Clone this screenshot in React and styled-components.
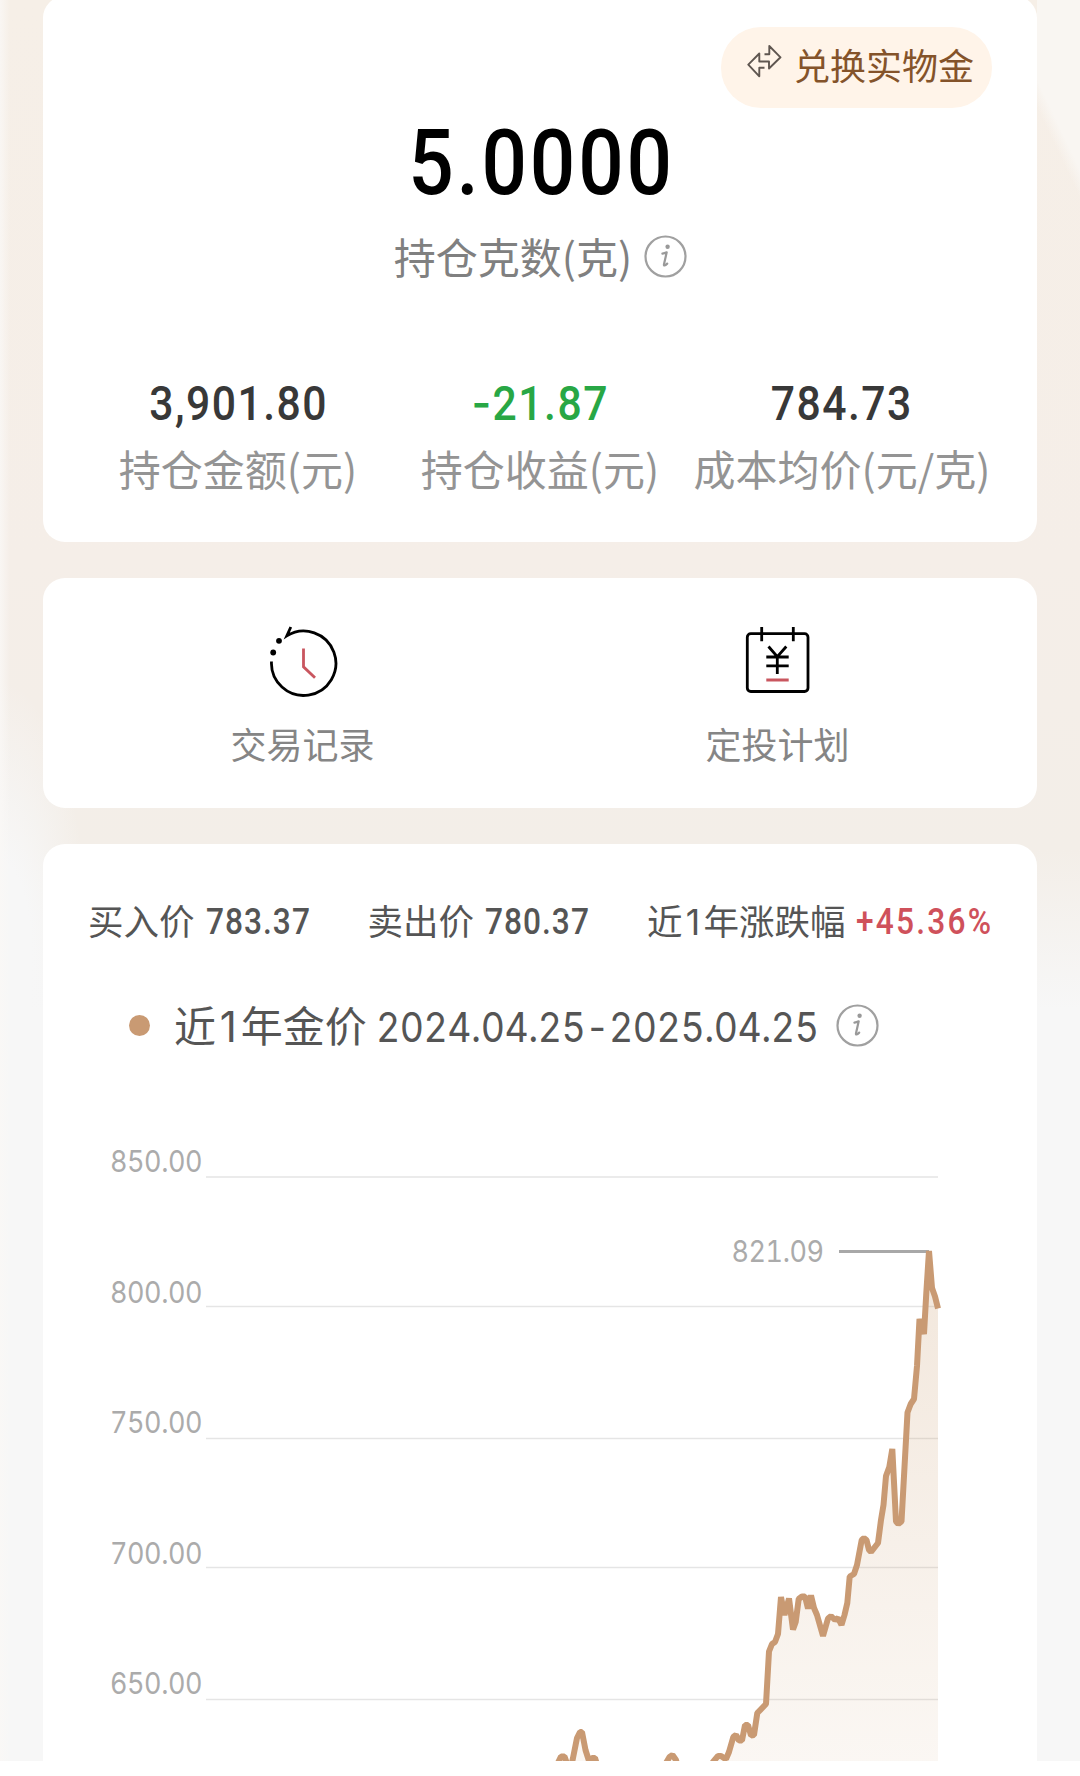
import React from "react";
import styled, { createGlobalStyle } from "styled-components";

const GlobalStyle = createGlobalStyle`
  * {
    box-sizing: border-box;
  }
  body {
    margin: 0;
    background: #fff;
    font-family: "Noto Sans CJK SC", "Noto Sans", sans-serif;
  }
`;

const Screen = styled.main`
  width: 1080px;
  height: 1761px;
  padding: 0 43px;
  overflow: hidden;
  background:
    linear-gradient(64.5deg, rgba(249, 246, 242, 0) 45%, #f9f6f2 53%) right top / 43px 270px no-repeat,
    linear-gradient(to right, rgba(250, 248, 246, 0.8), rgba(250, 248, 246, 0) 10px),
    radial-gradient(ellipse 90px 280px at 0 960px, #f7f7f7 35%, rgba(247, 247, 247, 0)),
    linear-gradient(to bottom, #f6efe7 0, #f5eee8 560px, #f3eee8 850px, #f7f7f7 1010px);
`;

const Card = styled.section`
  background: #fff;
  border-radius: 22px;
`;

const HoldingCard = styled(Card)`
  display: flex;
  flex-direction: column;
  align-items: center;
  height: 546px;
  margin-top: -4px;
  padding: 31px 45px 0;
`;

const ExchangeButton = styled.button`
  display: flex;
  align-items: flex-start;
  align-self: flex-end;
  width: 271px;
  height: 81px;
  padding: 12px 0 0 15px;
  border: none;
  border-radius: 40px;
  background: #fff4e9;
  color: #84532a;
  font-family: inherit;
  font-size: 36px;
  line-height: 50px;
  white-space: nowrap;

  svg {
    flex: none;
    margin: -3px -2px 0 0;
  }
`;

/* Roboto squeezed horizontally, with the tracking opened up again */
const Num = styled.span`
  display: inline-block;
  margin-right: -0.01em;
  font-family: Roboto, sans-serif;
  font-weight: 500;
  letter-spacing: 0.035em;
  transform: scaleX(0.88);
`;

const Sign = styled.span`
  font-family: Inter, sans-serif;
`;

const Grams = styled.div`
  height: 108px;
  margin-top: -8px;
  padding-left: 2px;
  font-size: 91px;
  line-height: 108px;
  color: #000;
`;

const Caption = styled.div`
  display: flex;
  align-items: center;
  gap: 12px;
  height: 60px;
  margin-top: 18px;
  padding-left: 1px;
  font-size: 42px;
  line-height: 60px;
  color: #808080;
`;

const Stats = styled.div`
  display: grid;
  grid-template-columns: repeat(3, 302px);
  margin-top: 83px;
  text-align: center;
`;

const StatValue = styled.div`
  height: 60px;
  font-size: 48.5px;
  line-height: 60px;
  color: ${({ $color }) => $color || "#383838"};
`;

const StatLabel = styled.div`
  margin-top: 9px;
  font-size: 42px;
  line-height: 60px;
  color: #949494;
  white-space: nowrap;
`;

const ActionCard = styled(Card)`
  display: grid;
  grid-template-columns: 1fr 1fr;
  height: 230px;
  margin-top: 36px;
  padding: 48px 22px 0;
`;

const Action = styled.div`
  display: flex;
  flex-direction: column;
  align-items: center;
  font-size: 36px;
  line-height: 52px;
  color: #858585;

  svg {
    margin-bottom: 19px;
  }
`;

const PriceCard = styled(Card)`
  height: 960px;
  margin-top: 36px;
`;

const Quotes = styled.div`
  display: flex;
  justify-content: space-between;
  padding: 53px 44px 0 45px;
  font-family: Inter, "Noto Sans CJK SC", sans-serif;
  font-size: 35.5px;
  line-height: 52px;
  color: #555;
  white-space: nowrap;
`;

const Quote = styled.div`
  display: flex;
  gap: 11px;
`;

const QuoteValue = styled(Num)`
  margin-top: -1px;
  margin-right: ${({ $wide }) => ($wide ? "-0.54em" : "-0.4em")};
  font-size: 36px;
  letter-spacing: ${({ $wide }) => ($wide ? "0.07em" : "0.032em")};
  color: ${({ $color }) => $color || "#555"};
  transform-origin: left;
`;

const One = styled.span`
  margin: 0 0.09em;
`;

const ChartTitle = styled.div`
  display: flex;
  align-items: center;
  height: 60px;
  margin-top: 46px;
  padding-left: 86px;
  font-family: Inter, "Noto Sans CJK SC", sans-serif;
  font-size: 42px;
  line-height: 60px;
  color: #555;
  white-space: nowrap;
`;

const Dot = styled.i`
  width: 21px;
  height: 21px;
  margin-right: 24px;
  border-radius: 50%;
  background: #c99a73;
`;

const SeriesName = styled.span`
  padding-top: 4px;
`;

const Period = styled.span`
  width: 440px;
  margin: 0 20px 0 9px;
  padding-top: 3px;
  font-size: 41.5px;
  font-variant-numeric: tabular-nums;
  letter-spacing: -0.5px;
  transform: scaleX(0.9);
  transform-origin: left;
`;

const Chart = styled.div`
  display: flex;
  align-items: flex-start;
  margin-top: 84px;
  padding-left: 67px;
`;

const Axis = styled.div`
  width: 96px;
  font-family: Inter, sans-serif;
  font-size: 30px;
  font-variant-numeric: tabular-nums;
  letter-spacing: -0.5px;
  line-height: 44px;
  color: #ababab;
`;

const Tick = styled.div`
  height: 130.5px;
  transform: scaleX(0.9);
  transform-origin: left;
`;

const PlotSvg = styled.svg`
  margin-top: 15px;

  text {
    font-family: Inter, sans-serif;
    font-size: 30px;
    font-variant-numeric: tabular-nums;
    letter-spacing: -0.5px;
  }
`;

const InfoIcon = () => (
  <svg width="43" height="43" viewBox="0 0 43 43" fill="none">
    <circle cx="21.5" cy="21.5" r="20" stroke="#a0a0a0" strokeWidth="2.2" />
    <circle cx="23.6" cy="11.8" r="2.2" fill="#999" />
    <path
      d="M18.4 18.6c1.6-.2 3-.7 4.3-1.3L20 29.2c-.4 1.9.9 1.7 3.2-.6"
      stroke="#999"
      strokeWidth="2.2"
      strokeLinecap="round"
      strokeLinejoin="round"
    />
  </svg>
);

const SwapIcon = () => (
  <svg width="60" height="50" viewBox="0 0 60 50" fill="none">
    <path
      d="M28.5 31.7H23.3V40.3L12.3 28.7L23.3 17.5V25.5H33V32.5L44.5 21.3L33.3 10V18.3H28.5"
      stroke="#5f5650"
      strokeWidth="1.9"
      strokeLinejoin="round"
    />
  </svg>
);

const HistoryIcon = () => (
  <svg width="72" height="72" viewBox="67.5 26.5 72 72" fill="none">
    <path d="M72 62A32.2 32.2 0 1 0 87.3 36.3L91.3 27.5" stroke="#000" strokeWidth="2.8" />
    <circle cx="79.5" cy="41.3" r="2.9" fill="#000" />
    <circle cx="73.7" cy="53" r="2.9" fill="#000" />
    <path d="M104 49V67.3L115.5 78.3" stroke="#c9565f" strokeWidth="2.8" />
  </svg>
);

const PlanIcon = () => (
  <svg width="72" height="72" viewBox="82 26 72 72" fill="none">
    <rect x="87.3" y="33.7" width="60.7" height="57.8" rx="3.5" stroke="#000" strokeWidth="2.8" />
    <path d="M101.7 27V41.3M133.3 27V41.3" stroke="#000" strokeWidth="2.8" />
    <path
      d="M108.5 46.5L117.3 56.7L126.3 46.5M106.3 57H128.7M106.3 65.8H128.7M117.3 56.5V74"
      stroke="#000"
      strokeWidth="2.8"
    />
    <path d="M106.3 80H128.7" stroke="#c9565f" strokeWidth="3" />
  </svg>
);

// [x, y] in plot coordinates
const line = [
  [340, 640], [349, 615], [355, 602.5], [358.5, 602.5], [364, 618], [367, 604],
  [371, 584], [374, 578], [376, 578], [379.5, 596], [383, 607], [386, 604], [389, 604],
  [394, 620], [430, 640], [452, 625], [460, 609], [463.5, 603], [466.5, 601], [470, 606],
  [475, 625], [500, 625], [507, 608], [512, 602], [515, 602], [518, 604], [520, 605],
  [523, 598], [527.3, 583], [530, 581], [533, 586.5], [536, 586.5], [539, 571], [542, 571],
  [545, 581.5], [548, 581], [551.3, 559], [560, 550], [563, 497.5], [566, 490],
  [569, 488], [572, 480], [575, 443], [578.5, 461], [583, 444.5], [587, 475.5],
  [589.7, 468], [592.7, 445], [596, 442.5], [599, 442.5], [602, 454.5],
  [605, 441.5], [608, 454], [611, 461], [617, 482], [622, 464.5], [625, 462],
  [629, 466], [632, 464], [635.5, 471], [638.5, 461], [641.3, 449], [643.7, 422.5],
  [648, 420], [651, 411], [655.7, 386], [658, 384], [660.5, 386], [663, 396],
  [665, 398], [672, 389], [675, 366], [677.5, 351], [680, 322], [683.3, 313],
  [686.3, 295], [690, 367.5], [692.3, 370], [695.5, 367.5], [701.5, 258.5],
  [704.7, 250], [708, 245], [711, 212], [713.5, 165], [718, 180], [720.3, 139],
  [723, 97], [726, 134], [729, 142.5], [732, 154.5],
];

const points = line.map((p) => p.join(",")).join(" ");
const gridLines = [23, 152.5, 284.5, 413.5, 545.5];

const Plot = () => (
  <PlotSvg width="736" height="607" viewBox="0 0 736 607" fill="none">
    <defs>
      <linearGradient id="area" gradientUnits="userSpaceOnUse" x1="0" y1="97" x2="0" y2="607">
        <stop offset="0" stopColor="#c99a6b" stopOpacity="0.24" />
        <stop offset="1" stopColor="#c99a6b" stopOpacity="0.08" />
      </linearGradient>
    </defs>
    {gridLines.map((y) => (
      <path key={y} d={`M0 ${y}H732`} stroke="#e5e5e5" strokeWidth="1.6" />
    ))}
    <polygon points={`340,700 ${points} 732,700`} fill="url(#area)" />
    <path d="M633 97.5H723" stroke="#a8a8a8" strokeWidth="3" />
    <polyline points={points} stroke="#c99a73" strokeWidth="6" strokeLinejoin="bevel" />
    <text transform="translate(525.5 107.5) scale(0.9 1)" fill="#ababab">
      821.09
    </text>
  </PlotSvg>
);

const stats = [
  { value: "3,901.80", label: "持仓金额(元)" },
  { sign: "-", value: "21.87", label: "持仓收益(元)", color: "#28a745" },
  { value: "784.73", label: "成本均价(元/克)" },
];

const quotes = [
  { label: "买入价", value: "783.37" },
  { label: "卖出价", value: "780.37" },
  { label: <>近<One>1</One>年涨跌幅</>, value: "+45.36%", color: "#cf515b", wide: true },
];

const ticks = ["850.00", "800.00", "750.00", "700.00", "650.00"];

export default function App() {
  return (
    <>
      <GlobalStyle />
      <Screen>
        <HoldingCard>
          <ExchangeButton>
            <SwapIcon />
            兑换实物金
          </ExchangeButton>
          <Grams>
            <Num>5.0000</Num>
          </Grams>
          <Caption>
            持仓克数(克)
            <InfoIcon />
          </Caption>
          <Stats>
            {stats.map((s) => (
              <div key={s.label}>
                <StatValue $color={s.color}>
                  <Num>
                    {s.sign && <Sign>{s.sign}</Sign>}
                    {s.value}
                  </Num>
                </StatValue>
                <StatLabel>{s.label}</StatLabel>
              </div>
            ))}
          </Stats>
        </HoldingCard>

        <ActionCard>
          <Action>
            <HistoryIcon />
            交易记录
          </Action>
          <Action>
            <PlanIcon />
            定投计划
          </Action>
        </ActionCard>

        <PriceCard>
          <Quotes>
            {quotes.map((q) => (
              <Quote key={q.value}>
                <span>{q.label}</span>
                <QuoteValue $color={q.color} $wide={q.wide}>
                  {q.value}
                </QuoteValue>
              </Quote>
            ))}
          </Quotes>
          <ChartTitle>
            <Dot />
            <SeriesName>
              近<One>1</One>年金价
            </SeriesName>
            <Period>2024.04.25-2025.04.25</Period>
            <InfoIcon />
          </ChartTitle>
          <Chart>
            <Axis>
              {ticks.map((t) => (
                <Tick key={t}>{t}</Tick>
              ))}
            </Axis>
            <Plot />
          </Chart>
        </PriceCard>
      </Screen>
    </>
  );
}
